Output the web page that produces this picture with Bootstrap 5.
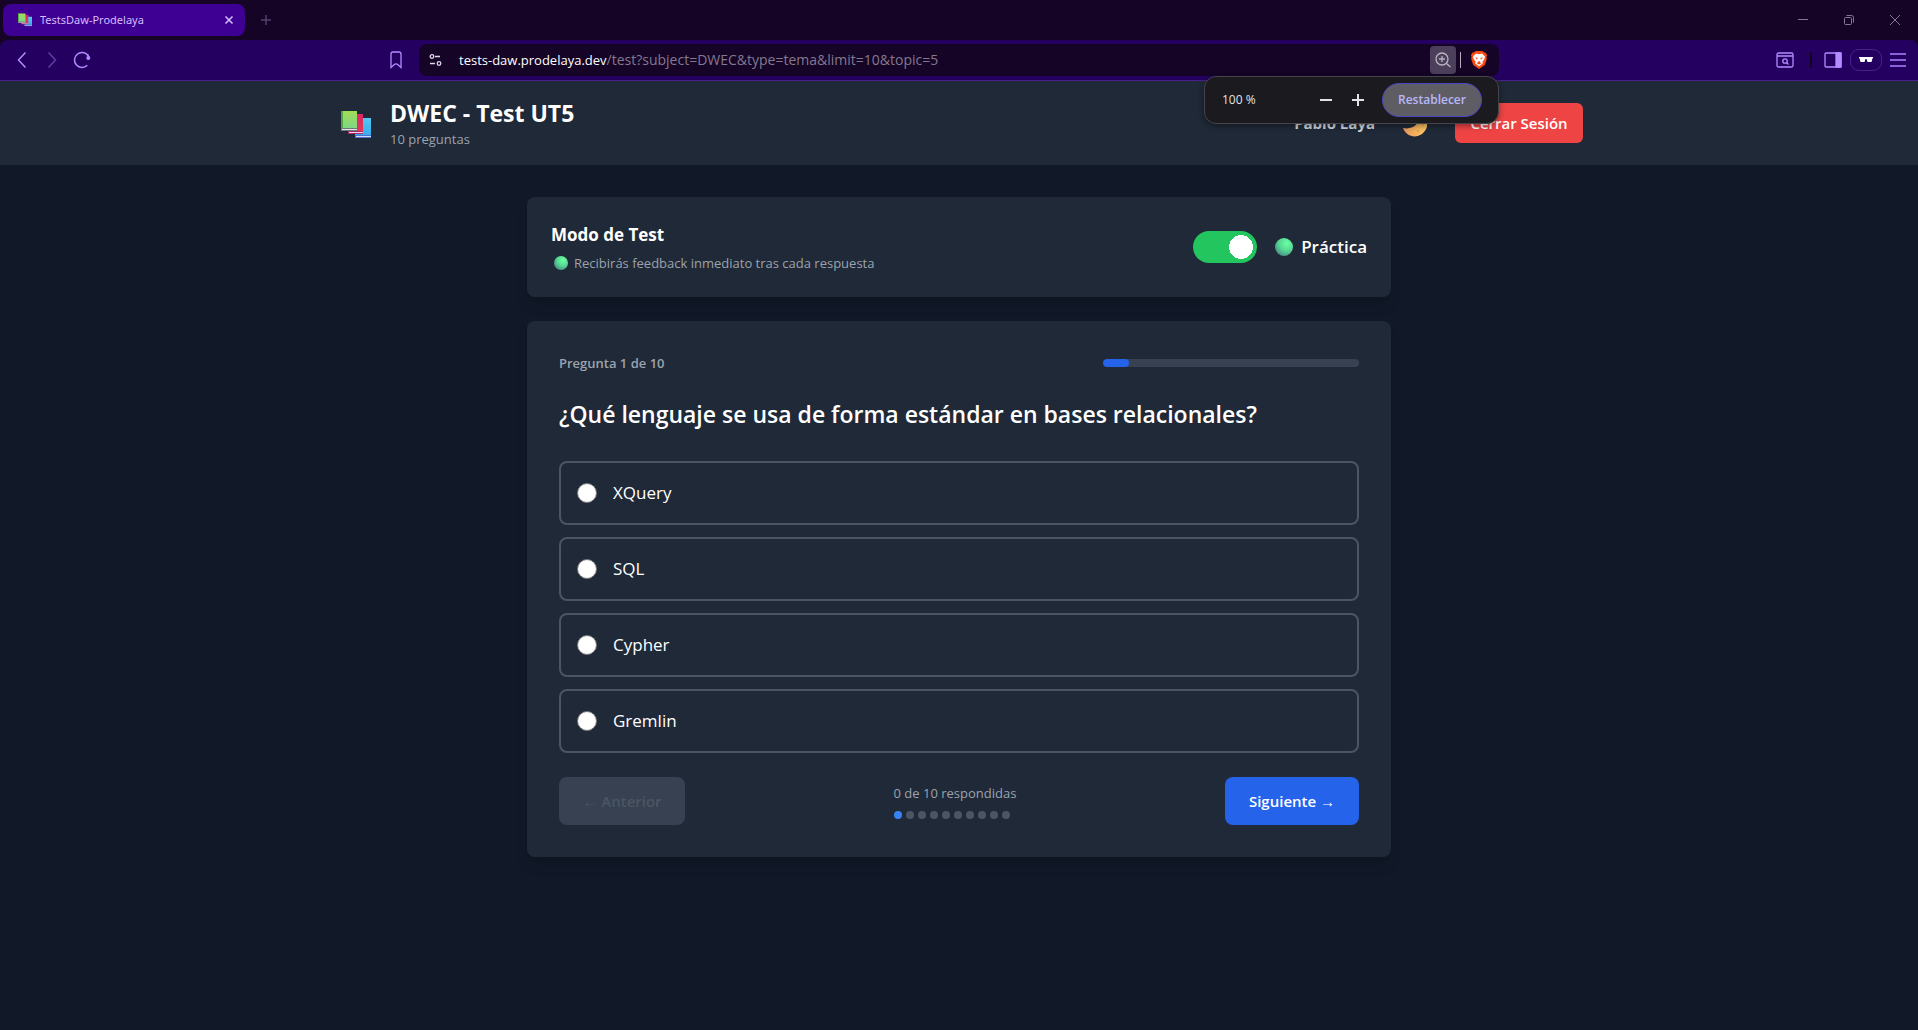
<!DOCTYPE html>
<html lang="es" data-bs-theme="dark">
<head>
<meta charset="utf-8">
<meta name="viewport" content="width=device-width, initial-scale=1">
<title>TestsDaw-Prodelaya</title>
<link href="https://cdn.jsdelivr.net/npm/bootstrap@5.3.0/dist/css/bootstrap.min.css" rel="stylesheet">
<style>
  body { background: #111827; color: #fff; font-family: "Open Sans", "Noto Sans", sans-serif; font-size: 15px; line-height: 24px; min-height: 100vh; }
  button { font-family: inherit; }
  svg { display: block; flex: none; }
  .plain { background: none; border: 0; padding: 0; color: inherit; display: flex; align-items: center; justify-content: center; flex: none; }

  /* Browser frame */
  .tabstrip { height: 40px; background: #150426; color: #75638c; }
  .tab-item { width: 242px; height: 32px; border-radius: 8px; background: #3e0092; color: #d3bcff; font: 11px/16px "Noto Sans", sans-serif; margin-left: 3px; padding: 0 11px 0 15px; }
  .window-ctl { width: 46px; height: 40px; color: #84769a; }
  .strip-under { background: #150426; }
  .toolbar { display: grid; grid-template-columns: 1fr minmax(0, 1080px) 1fr; align-items: center; height: 41px; background: #240060; border-bottom: 1px solid #4a2089; border-radius: 8px 8px 0 0; color: #b28cff; }
  .nav-ctl { width: 30px; height: 32px; }
  .address { height: 32px; border-radius: 8px; background: #150426; padding: 0 10px 0 8px; }
  .address-text { font: 14px/20px "Open Sans", sans-serif; color: #83798f; }
  .address-text b { font-size: 13px; font-weight: 400; color: #fff; }
  .zoom-ctl { width: 26px; height: 28px; border-radius: 4px; background: #4b3f5b; color: #bab5c0; }
  .split { width: 1px; height: 16px; background: #b5b0bb; }
  .split-dark { width: 2px; height: 16px; background: #12031f; }
  .private-ctl { width: 32px; height: 22px; border: 1px solid #4a2089; border-radius: 9px; color: #fff; }
  .zoom-pop { position: absolute; top: 32px; right: 0; width: 295px; height: 48px; background: #1b1a1f; border: 1px solid #45444a; border-radius: 12px; box-shadow: 0 2px 6px rgba(0,0,0,.4); color: #e3e3e3; font: 12px/16px "Open Sans", sans-serif; padding: 0 16px 0 17px; z-index: 10; }
  .pop-step { width: 32px; height: 32px; }
  .pop-reset { width: 100px; height: 34px; border: 1px solid #4c43c4; border-radius: 17px; background: #5e5d64; color: #b9b7fb; font-size: 12px; font-weight: 600; }

  /* Page */
  .site-header { background: #1f2937; }
  .wide { max-width: 1280px; padding: 16px; }
  .narrow { max-width: 896px; padding: 32px 16px; gap: 24px; }
  .brand-icon { width: 43px; padding: 4px 0 0 6px; }
  .title { font-size: 23px; line-height: 32px; font-weight: 700; margin: 0; }
  .question { font-size: 23px; line-height: 34px; font-weight: 600; margin: 0 0 30px; }
  .small-text { font-size: 13px; line-height: 20px; color: #9ca3af; margin: 0; }
  .inline-orb { margin: 0 6px 0 3px; }
  .user { font-weight: 700; color: #d1d5db; }
  .logout { background: #ef4444; color: #fff; font-size: 15px; line-height: 24px; font-weight: 600; border: 0; border-radius: 6px; width: 128px; height: 40px; }
  .panel { background: #1f2937; border-radius: 8px; box-shadow: 0 10px 15px -3px rgba(0,0,0,.12), 0 4px 6px -4px rgba(0,0,0,.12); }
  .subtitle { font-size: 17px; line-height: 28px; font-weight: 700; margin: 0 0 4px; }
  .mode-toggle { appearance: none; width: 64px; height: 32px; margin: 0; border-radius: 16px; background: radial-gradient(circle at 48px 16px, #fff 12px, #22c55e 12px); flex: none; }
  .mode-label { font-size: 17px; line-height: 28px; font-weight: 600; padding-left: 2px; }
  .meter { width: 256px; height: 8px; border-radius: 4px; background: #374151; overflow: hidden; }
  .meter .progress-bar { background: #2563eb; border-radius: 4px; }
  .choices { gap: 12px; }
  .choice { border: 2px solid #4b5563; border-radius: 8px; padding: 16px; gap: 16px; font-size: 17px; line-height: 28px; }
  .choice input { appearance: none; width: 20px; height: 20px; margin: 0; border: 1px solid #767676; border-radius: 50%; background: #fff; }
  .choice input:checked { border: 6px solid #2563eb; }
  .step-btn { height: 48px; border: 0; border-radius: 8px; font-size: 15px; line-height: 24px; font-weight: 600; }
  .step-prev { width: 126px; background: #374151; color: #4b5563; }
  .step-next { width: 134px; background: #2563eb; color: #fff; }
  .pip { width: 8px; height: 8px; border-radius: 50%; background: #4b5563; }
  .pip-on { background: #3b82f6; }
</style>
</head>
<body>
<svg width="0" height="0" class="position-absolute" aria-hidden="true">
  <defs>
    <linearGradient id="g1" x1="0" y1="0" x2="0" y2="1"><stop offset="0" stop-color="#a2dc55"/><stop offset="1" stop-color="#78d68e"/></linearGradient>
    <linearGradient id="g2" x1="0" y1="0" x2="0" y2="1"><stop offset="0" stop-color="#e0246b"/><stop offset="1" stop-color="#e33a4d"/></linearGradient>
    <linearGradient id="g3" x1="0" y1="0" x2="0" y2="1"><stop offset="0" stop-color="#56c7f0"/><stop offset="1" stop-color="#35a8f0"/></linearGradient>
    <radialGradient id="g4" cx=".65" cy=".3" r=".75"><stop offset="0" stop-color="#6dffa2"/><stop offset=".55" stop-color="#55d894"/><stop offset="1" stop-color="#4b8e84"/></radialGradient>
    <linearGradient id="g5" x1="0" y1="0" x2="1" y2="0"><stop offset="0" stop-color="#e8975c"/><stop offset="1" stop-color="#ffca62"/></linearGradient>
    <symbol id="books" viewBox="0 0 30 28">
      <path d="M14 7h16v20H14z" fill="url(#g3)"/><path d="M14 24h16v3H14z" fill="#4d6fd0"/><path d="M15 25h15v1H15z" fill="#d7d9fa"/>
      <path d="M7 3h15v20H7z" fill="url(#g2)"/><path d="M7 20h15v3H7z" fill="#a32769"/><path d="M8 21h14v1H8z" fill="#f0d4ea"/>
      <path d="M0 0h16v20H0z" fill="url(#g1)"/><path d="M0 0h2v20H0z" fill="#55a543"/><path d="M0 17h16v3H0z" fill="#6a7c70"/><path d="M1 18h15v1H1z" fill="#eadcf2"/>
    </symbol>
    <symbol id="orb" viewBox="0 0 18 18"><circle cx="9" cy="9" r="9" fill="url(#g4)"/></symbol>
  </defs>
</svg>

<div class="tabstrip d-flex align-items-center">
  <div class="tab-item d-flex align-items-center">
    <svg width="14" height="14"><use href="#books"/></svg>
    <span class="ms-2 flex-grow-1">TestsDaw-Prodelaya</span>
    <button class="plain" aria-label="Cerrar pestaña"><svg width="10" height="10" stroke="currentColor" stroke-width="1.600"><path d="M1.500 1.500l7 7M8.500 1.500l-7 7"/></svg></button>
  </div>
  <button class="plain ms-3" aria-label="Nueva pestaña"><svg width="10" height="10" stroke="#54406e" stroke-width="1.500"><path d="M5 0v10M0 5h10"/></svg></button>
  <div class="d-flex ms-auto">
    <button class="plain window-ctl" aria-label="Minimizar"><svg width="10" height="10" stroke="currentColor"><path d="M0 4.500h10"/></svg></button>
    <button class="plain window-ctl" aria-label="Restaurar"><svg width="10" height="10" stroke="currentColor" fill="none"><rect x=".5" y="2.500" width="7" height="7" rx="1"/><path d="M2.500.5h5a2 2 0 0 1 2 2v5"/></svg></button>
    <button class="plain window-ctl" aria-label="Cerrar"><svg width="10" height="10" stroke="currentColor"><path d="M0 0l10 10M10 0L0 10"/></svg></button>
  </div>
</div>
<div class="strip-under">
<div class="toolbar">
  <div class="d-flex align-items-center ps-2">
    <button class="plain nav-ctl" aria-label="Atrás"><svg width="12" height="16" fill="none" stroke="currentColor" stroke-width="1.500"><path d="M8.500.5L1.500 8l7 7.500"/></svg></button>
    <button class="plain nav-ctl" aria-label="Adelante" disabled><svg width="12" height="16" fill="none" stroke="#633aa8" stroke-width="1.500"><path d="M1.500.5l7 7.500-7 7.500"/></svg></button>
    <button class="plain nav-ctl" aria-label="Recargar"><svg width="20" height="18" fill="none" stroke="currentColor" stroke-width="1.500"><path d="M14.300 14.300A7.500 7.500 0 1 1 15 4.500"/><circle cx="15.300" cy="7" r="2" fill="currentColor" stroke="none"/><path d="M14.500 3l1.500 4"/></svg></button>
    <button class="plain nav-ctl ms-auto me-2" aria-label="Marcador"><svg width="12" height="18" fill="none" stroke="currentColor" stroke-width="1.300"><path d="M1 16.500V3a2 2 0 0 1 2-2h6a2 2 0 0 1 2 2v13.500l-3-2.800a3 3 0 0 0-4 0z"/></svg></button>
  </div>
  <div class="address d-flex align-items-center position-relative">
    <svg width="16" height="16" fill="none" stroke="#ddd7e6" stroke-width="1.300" class="me-3"><circle cx="5" cy="4.500" r="1.800"/><path d="M8 4.500h5M3 11.500h5"/><circle cx="12" cy="11.500" r="1.800"/></svg>
    <div class="address-text flex-grow-1"><b>tests-daw.prodelaya.dev</b>/test?subject=DWEC&amp;type=tema&amp;limit=10&amp;topic=5</div>
    <button class="plain zoom-ctl" aria-label="Zoom"><svg width="16" height="16" fill="none" stroke="currentColor" stroke-width="1.300"><circle cx="7" cy="7" r="6"/><path d="M11.500 11.500l4 3.500M7 4v6M4 7h6"/></svg></button>
    <div class="split ms-1 me-2"></div>
    <button class="plain" aria-label="Brave Shields"><svg width="20" height="18" viewBox="-1 0 20 18"><path d="M5.500 0h7l1.500 1.500h1.500L17 4l-.5 2 .3 2-2 6-5.800 4-5.800-4-2-6 .3-2L1 4l1.500-2.500H4z" fill="#fb4a10"/><path d="M9 3.200l3-.6L15 5.600l-.5 2.200-2 3 .2 1.600L9 15.300l-3.700-2.900.2-1.600-2-3L3 5.600l3-3z" fill="#fff"/><path d="M5 6.300l2.700.7L7 8.700zM13 6.300l-2.700.7.7 1.700zM8 10l1 .8 1-.8v1.300l1.400 1L9 13.500l-2.400-1.200 1.400-1z" fill="#fb4a10"/></svg></button>
    <div class="zoom-pop d-flex align-items-center">
      <span class="flex-grow-1">100 %</span>
      <button class="plain pop-step" aria-label="Reducir"><svg width="12" height="12" stroke="currentColor" stroke-width="2"><path d="M0 6h12"/></svg></button>
      <button class="plain pop-step me-2" aria-label="Ampliar"><svg width="12" height="12" stroke="currentColor" stroke-width="2"><path d="M0 6h12M6 0v12"/></svg></button>
      <button class="pop-reset p-0">Restablecer</button>
    </div>
  </div>
  <div class="d-flex align-items-center justify-content-end gap-2 pe-2">
    <button class="plain me-1" aria-label="Buscar pestañas"><svg width="18" height="16" fill="none" stroke="currentColor" stroke-width="1.300"><rect x="1" y="1" width="16" height="14" rx="1.500"/><path d="M1 4h16M10.500 10.500l2 2"/><circle cx="9" cy="9" r="2.200"/></svg></button>
    <div class="split-dark ms-1 me-1"></div>
    <button class="plain" aria-label="Barra lateral"><svg width="18" height="16" fill="none" stroke="currentColor" stroke-width="1.300"><rect x="1" y="1" width="16" height="14" rx="1"/><path d="M12 1h5v14h-5z" fill="currentColor"/></svg></button>
    <button class="plain private-ctl" aria-label="Ventana privada"><svg width="14" height="6" fill="currentColor"><path d="M0 0h14v1l-.6.500L12.500 5h-4L7.500 2h-1L5.500 5h-4L.6 1.500 0 1z"/></svg></button>
    <button class="plain me-1" aria-label="Menú"><svg width="16" height="14" stroke="#8b62dc" stroke-width="2"><path d="M0 1h16M0 7h16M0 13h16"/></svg></button>
  </div>
</div>
</div>

<header class="site-header">
  <div class="wide mx-auto d-flex align-items-center justify-content-between">
    <div class="d-flex align-items-center">
      <div class="brand-icon me-2 pe-1"><svg width="30" height="28"><use href="#books"/></svg></div>
      <div class="ms-1">
        <h1 class="title">DWEC - Test UT5</h1>
        <p class="small-text">10 preguntas</p>
      </div>
    </div>
    <div class="d-flex align-items-center">
      <span class="user me-4">Pablo Laya</span>
      <button class="plain ms-1 me-4" aria-label="Cambiar tema"><svg width="24" height="28"><path d="M16 2C26 6 27 19 19 25C12 30 3 27 0 19C10 21 19 15 16 2z" fill="url(#g5)"/><circle cx="15" cy="22" r="1.500" fill="#eda54f"/><circle cx="20" cy="16" r="1" fill="#eda54f"/></svg></button>
      <button class="logout p-0 ms-1">Cerrar Sesión</button>
    </div>
  </div>
</header>

<main class="narrow mx-auto d-flex flex-column">
  <section class="panel p-4 d-flex align-items-center justify-content-between">
    <div>
      <h2 class="subtitle">Modo de Test</h2>
      <p class="small-text d-flex align-items-center"><svg width="14" height="14" class="inline-orb"><use href="#orb"/></svg>Recibirás feedback inmediato tras cada respuesta</p>
    </div>
    <div class="d-flex align-items-center gap-3">
      <input class="mode-toggle" type="checkbox" role="switch" id="modo" checked>
      <label class="mode-label d-flex align-items-center gap-2" for="modo"><svg width="18" height="18"><use href="#orb"/></svg>Práctica</label>
    </div>
  </section>

  <section class="panel px-4 py-4">
    <div class="p-2">
      <div class="d-flex align-items-center justify-content-between mb-4">
        <span class="small-text fw-semibold">Pregunta 1 de 10</span>
        <div class="meter" role="progressbar" aria-label="Progreso" aria-valuenow="10" aria-valuemin="0" aria-valuemax="100"><div class="progress-bar h-100" style="width:10%"></div></div>
      </div>
      <h2 class="question">¿Qué lenguaje se usa de forma estándar en bases relacionales?</h2>
      <div class="choices d-grid mb-4">
        <label class="choice d-flex align-items-center"><input type="radio" name="respuesta">XQuery</label>
        <label class="choice d-flex align-items-center"><input type="radio" name="respuesta">SQL</label>
        <label class="choice d-flex align-items-center"><input type="radio" name="respuesta">Cypher</label>
        <label class="choice d-flex align-items-center"><input type="radio" name="respuesta">Gremlin</label>
      </div>
      <div class="d-flex align-items-center justify-content-between">
        <button class="step-btn step-prev p-0" disabled>← Anterior</button>
        <div>
          <p class="small-text mb-2">0 de 10 respondidas</p>
          <div class="d-flex gap-1">
            <span class="pip pip-on"></span><span class="pip"></span><span class="pip"></span><span class="pip"></span><span class="pip"></span><span class="pip"></span><span class="pip"></span><span class="pip"></span><span class="pip"></span><span class="pip"></span>
          </div>
        </div>
        <button class="step-btn step-next p-0">Siguiente →</button>
      </div>
    </div>
  </section>
</main>
<script src="https://cdn.jsdelivr.net/npm/bootstrap@5.3.0/dist/js/bootstrap.bundle.min.js"></script>
</body>
</html>
